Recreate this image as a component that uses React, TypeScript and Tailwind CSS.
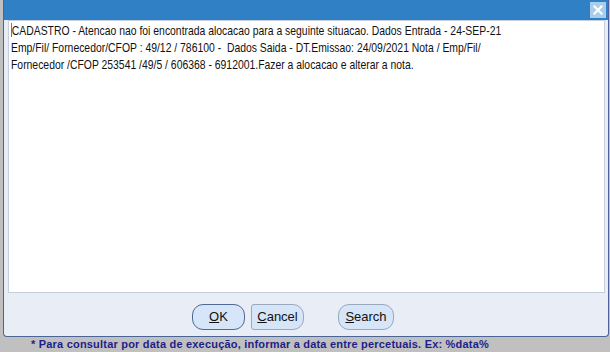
import React from "react";

export default function App() {
    return (
        <div className="w-[610px] h-[352px] bg-[#c0c0c0] flex flex-col overflow-hidden" style={{ fontFamily: '"Liberation Sans", Arial, sans-serif' }}>
            {/* Dialog panel */}
            <div className="ml-[3px] mr-[1px] h-[337px] flex flex-col bg-[#e8edf6] border-l border-r border-b border-[#4a6497] rounded-b-[4px]">
                {/* Title bar */}
                <div className="h-[20px] bg-[#2f80c5] flex items-center justify-end pr-[2px]">
                    <div className="w-[16px] h-[16px] bg-[#a9cdea] flex items-center justify-center">
                        <svg width="10" height="10" viewBox="0 0 10 10">
                            <path d="M1.5 1.5 L8.5 8.5 M8.5 1.5 L1.5 8.5" stroke="#ffffff" strokeWidth="2.2" strokeLinecap="square" />
                        </svg>
                    </div>
                </div>

                {/* Message area */}
                <div className="ml-[4px] mr-[3px] h-[273px] bg-white border border-[#c5cedc] px-[2px] pt-[1px] overflow-hidden">
                    <p className="text-[13.5px] leading-[17px] text-[#111] whitespace-nowrap origin-left scale-x-[0.77]">
                        <span className="inline-block w-[1px] h-[14px] bg-[#1f4fd1] align-[-2px]" />
                        CADASTRO - Atencao nao foi encontrada alocacao para a seguinte situacao. Dados Entrada - 24-SEP-21
                        <br />
                        Emp/Fil/ Fornecedor/CFOP : 49/12 / 786100 -&nbsp; Dados Saida - DT.Emissao: 24/09/2021 Nota / Emp/Fil/
                        <br />
                        Fornecedor /CFOP 253541 /49/5 / 606368 - 6912001.Fazer a alocacao e alterar a nota.
                    </p>
                </div>

                {/* Buttons */}
                <div className="flex items-center pl-[188px] mt-[11px] gap-[6px]">
                    <button className="w-[53px] h-[26px] rounded-[11px] border border-[#4f6a94] bg-[#d6e5f7] text-[13px] text-[#111]">
                        <span className="underline">O</span>K
                    </button>
                    <button className="w-[53px] h-[26px] rounded-l-[3px] rounded-r-[11px] border border-[#9aa8bf] bg-[#d6e5f7] text-[13px] text-[#111]">
                        <span className="underline">C</span>ancel
                    </button>
                    <button className="ml-[28px] w-[56px] h-[26px] rounded-[11px] border border-[#9aa8bf] bg-[#d6e5f7] text-[13px] text-[#111]">
                        <span className="underline">S</span>earch
                    </button>
                </div>
            </div>

            {/* Footer hint */}
            <div className="h-[15px] flex items-center pl-[31px] text-[11px] font-bold text-[#1e1e8a] tracking-[0.2px]">
                * Para consultar por data de execução, informar a data entre percetuais. Ex: %data%
            </div>
        </div>
    );
}
